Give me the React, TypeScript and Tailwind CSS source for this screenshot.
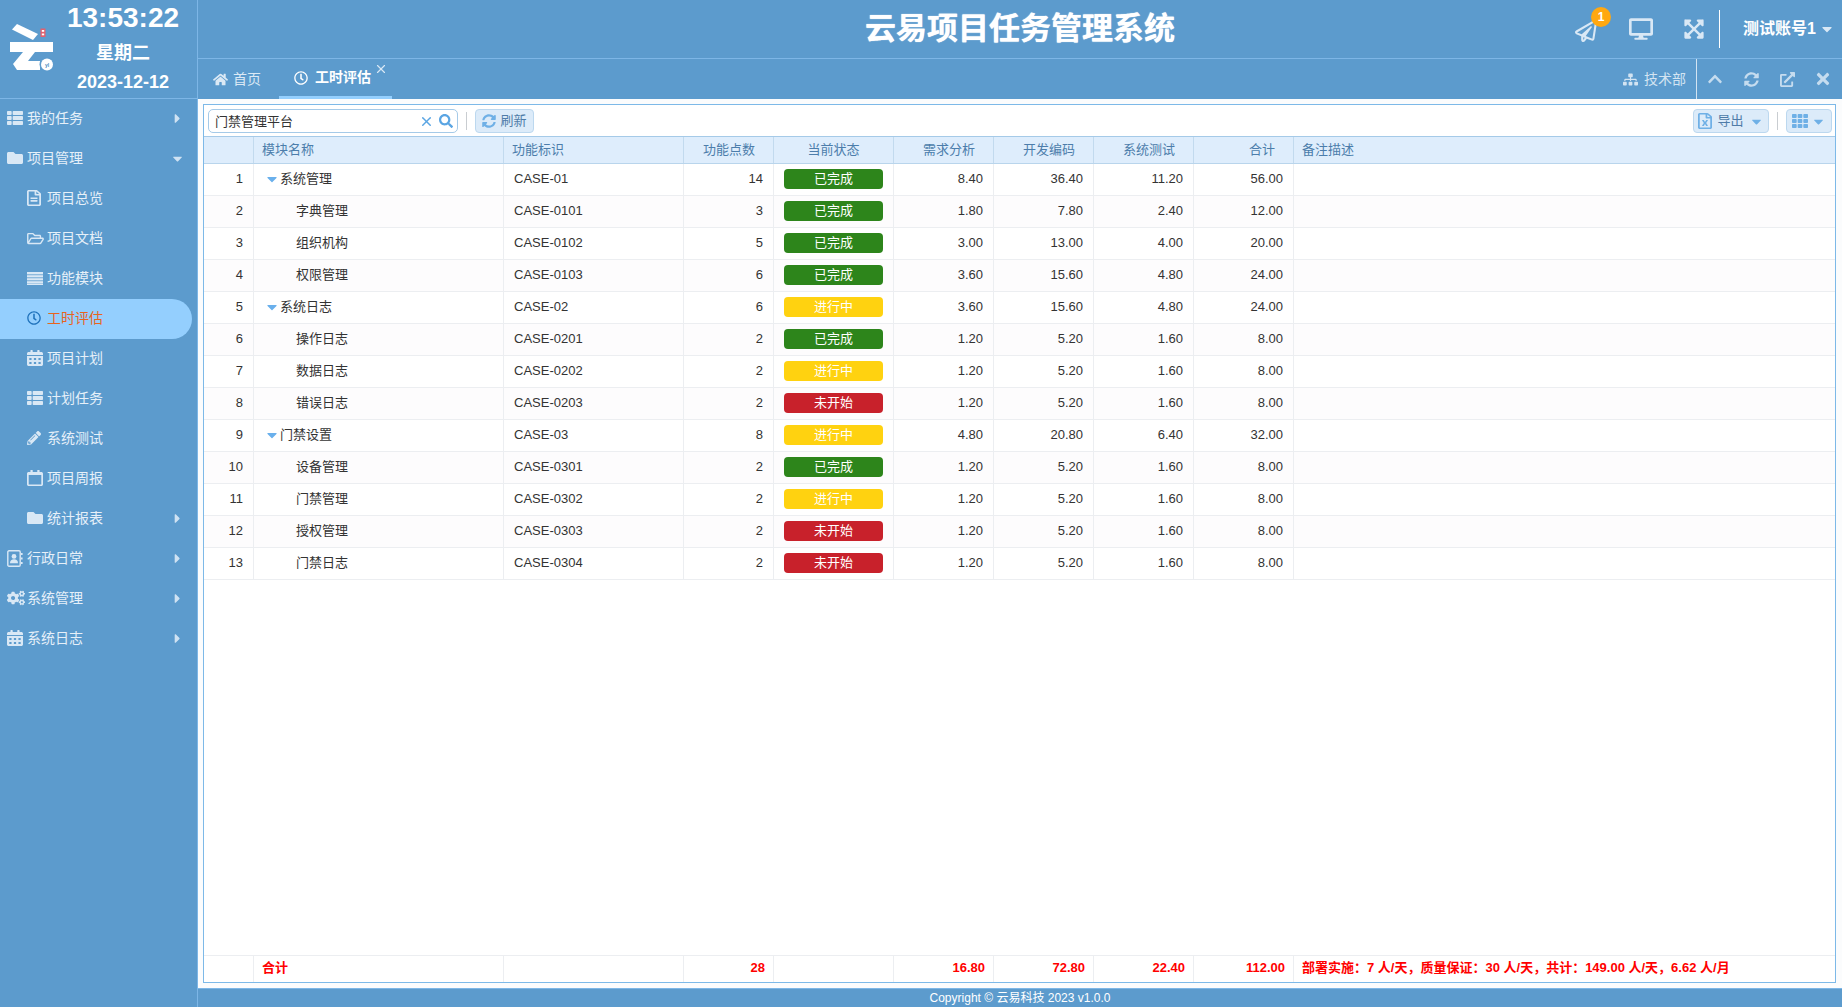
import React from "react";
import { X } from "lucide-react";
import {
  FaThList, FaFolder, FaRegFileAlt, FaRegFolderOpen, FaRegClock, FaCalendarAlt, FaPencilAlt,
  FaRegCalendar, FaCogs, FaCaretRight, FaCaretDown, FaHome, FaSitemap, FaChevronUp,
  FaSyncAlt, FaExternalLinkAlt, FaTimes, FaRegPaperPlane, FaDesktop, FaExpandArrowsAlt, FaSearch,
  FaRegFileExcel, FaTh,
} from "react-icons/fa";

type Item = { label: string; icon: React.ReactNode; sub?: boolean; caret?: "r" | "d"; active?: boolean };

const Stripes = () => (
  <svg viewBox="0 0 16 13" className="w-4 h-[13px]" fill="currentColor">
    <rect x="0" y="0" width="16" height="2.4" />
    <rect x="0" y="3.2" width="16" height="2.2" />
    <rect x="0" y="6.2" width="16" height="2.2" />
    <rect x="0" y="9.2" width="16" height="2.2" />
    <rect x="0" y="11.6" width="16" height="1.4" />
  </svg>
);

const Contact = () => (
  <svg viewBox="0 0 16 17" className="w-4 h-[17px]" fill="currentColor">
    <rect x="0.8" y="0.8" width="12.4" height="15.4" rx="1.2" fill="none" stroke="currentColor" strokeWidth="1.4" />
    <circle cx="7" cy="6.4" r="2.4" />
    <path d="M3 13.2c0-3 1.6-4 4-4s4 1 4 4z" />
    <rect x="14" y="3" width="1.6" height="2" />
    <rect x="14" y="7.5" width="1.6" height="2" />
    <rect x="14" y="12" width="1.6" height="2" />
  </svg>
);

const menu: Item[] = [
  { label: "我的任务", icon: <FaThList className="w-4 h-4" />, caret: "r" },
  { label: "项目管理", icon: <FaFolder className="w-4 h-4" />, caret: "d" },
  { label: "项目总览", icon: <FaRegFileAlt className="w-[14px] h-4" preserveAspectRatio="none" />, sub: true },
  { label: "项目文档", icon: <FaRegFolderOpen className="w-[17px] h-[15px]" />, sub: true },
  { label: "功能模块", icon: <Stripes />, sub: true },
  { label: "工时评估", icon: <FaRegClock className="w-[14px] h-[14px]" />, sub: true, active: true },
  { label: "项目计划", icon: <FaCalendarAlt className="w-4 h-4" preserveAspectRatio="none" />, sub: true },
  { label: "计划任务", icon: <FaThList className="w-4 h-4" />, sub: true },
  { label: "系统测试", icon: <FaPencilAlt className="w-[14px] h-[14px]" />, sub: true },
  { label: "项目周报", icon: <FaRegCalendar className="w-4 h-4" preserveAspectRatio="none" />, sub: true },
  { label: "统计报表", icon: <FaFolder className="w-4 h-4" />, sub: true, caret: "r" },
  { label: "行政日常", icon: <Contact />, caret: "r" },
  { label: "系统管理", icon: <FaCogs className="w-[18px] h-[16px]" />, caret: "r" },
  { label: "系统日志", icon: <FaCalendarAlt className="w-4 h-4" preserveAspectRatio="none" />, caret: "r" },
];

type St = "done" | "doing" | "todo";
type Row = [number, string, boolean, string, number, St, string, string, string, string];
const rows: Row[] = [
  [1, "系统管理", true, "CASE-01", 14, "done", "8.40", "36.40", "11.20", "56.00"],
  [2, "字典管理", false, "CASE-0101", 3, "done", "1.80", "7.80", "2.40", "12.00"],
  [3, "组织机构", false, "CASE-0102", 5, "done", "3.00", "13.00", "4.00", "20.00"],
  [4, "权限管理", false, "CASE-0103", 6, "done", "3.60", "15.60", "4.80", "24.00"],
  [5, "系统日志", true, "CASE-02", 6, "doing", "3.60", "15.60", "4.80", "24.00"],
  [6, "操作日志", false, "CASE-0201", 2, "done", "1.20", "5.20", "1.60", "8.00"],
  [7, "数据日志", false, "CASE-0202", 2, "doing", "1.20", "5.20", "1.60", "8.00"],
  [8, "错误日志", false, "CASE-0203", 2, "todo", "1.20", "5.20", "1.60", "8.00"],
  [9, "门禁设置", true, "CASE-03", 8, "doing", "4.80", "20.80", "6.40", "32.00"],
  [10, "设备管理", false, "CASE-0301", 2, "done", "1.20", "5.20", "1.60", "8.00"],
  [11, "门禁管理", false, "CASE-0302", 2, "doing", "1.20", "5.20", "1.60", "8.00"],
  [12, "授权管理", false, "CASE-0303", 2, "todo", "1.20", "5.20", "1.60", "8.00"],
  [13, "门禁日志", false, "CASE-0304", 2, "todo", "1.20", "5.20", "1.60", "8.00"],
];

const Status = ({ s }: { s: St }) => {
  if (s === "done") return <div className="mx-auto w-[99px] h-5 rounded-[4px] bg-[#2d851b] text-white text-center leading-[19px]">已完成</div>;
  if (s === "doing") return <div className="mx-auto w-[99px] h-5 rounded-[4px] bg-[#ffd210] text-white text-center leading-[19px]">进行中</div>;
  return <div className="mx-auto w-[99px] h-5 rounded-[4px] bg-[#c8212b] text-white text-center leading-[19px]">未开始</div>;
};

const Logo = () => (
  <svg viewBox="0 0 56 98" className="w-14 h-[98px] shrink-0">
    <polygon points="17,24 38,34 33,40 12,29.5" fill="#fff" />
    <polygon points="10,42 53,42 53,52 35,52 28,61 40,61 40,70 17,70 13,64 23,52 10,52" fill="#fff" />
    <circle cx="47" cy="64.5" r="7.5" fill="#5c9bcd" />
    <circle cx="47" cy="64.5" r="6" fill="#fff" />
    <text x="47" y="66.5" fontSize="5" fontWeight="700" textAnchor="middle" fill="#4a8ac0">yl</text>
    <rect x="40.5" y="28.5" width="5" height="8.5" fill="#e2616f" />
    <rect x="41.8" y="30" width="2.4" height="1.8" fill="#fff" />
    <rect x="41.8" y="33.5" width="2.4" height="1.8" fill="#fff" />
  </svg>
);

export default function App() {
  return (
    <div className="flex h-screen w-full overflow-hidden bg-[#5c9bcd] font-['Liberation_Sans','Noto_Sans_CJK_SC',sans-serif] text-[13px] text-[#333]">
      {/* sidebar */}
      <aside className="w-[198px] shrink-0 border-r border-[#7db6e6]">
        <div className="h-[99px] border-b border-[#7db6e6] flex">
          <Logo />
          <div className="w-[134px] text-white font-bold text-center">
            <div className="h-9 text-[28px] leading-9">13:53:22</div>
            <div className="h-[34px] text-[18px] leading-[34px]">星期二</div>
            <div className="h-6 text-[18px] leading-6">2023-12-12</div>
          </div>
        </div>
        <nav>
          {menu.map((m) => (
            <div
              key={m.label}
              className={
                "h-10 pb-[2px] flex items-center text-[14px] w-[192px] " +
                (m.sub ? "pl-[27px] " : "pl-[7px] ") +
                (m.active ? "bg-[#94cffe] rounded-r-[20px] text-[#e8641e]" : "text-[#e6f0f9]")
              }
            >
              <span className={"w-5 flex items-center " + (m.active ? "text-[#1f72bb]" : "text-[#d9e8f5]")}>{m.icon}</span>
              <span>{m.label}</span>
              {m.caret === "r" && <FaCaretRight className="ml-auto mr-[7px] w-[15px] h-[15px] text-[#cfe2f3]" />}
              {m.caret === "d" && <FaCaretDown className="ml-auto mr-[7px] w-[15px] h-[15px] text-[#cfe2f3]" />}
            </div>
          ))}
        </nav>
      </aside>

      {/* main */}
      <main className="flex-1 min-w-0 flex flex-col">
        <header className="h-[59px] shrink-0 border-b border-[#7db6e6] grid grid-cols-[267px_1fr_267px] items-center">
          <div />
          <h1 className="text-center text-[31px] font-bold text-white [text-shadow:0_0_1px_#fff]">云易项目任务管理系统</h1>
          <div className="flex items-center text-[#d9e8f5]">
            <div className="relative w-[22px] h-[22px] mt-[4px]">
              <FaRegPaperPlane className="w-[22px] h-[22px]" />
              <span className="absolute -top-[13px] left-[16px] w-5 h-5 rounded-full bg-[#ffa811] text-white text-[12px] font-bold flex items-center justify-center">1</span>
            </div>
            <FaDesktop className="ml-[32px] w-6 h-6" />
            <FaExpandArrowsAlt className="ml-[31px] w-5 h-[22px]" />
            <div className="ml-[15px] w-px h-[38px] bg-white" />
            <span className="ml-[23px] text-[16px] font-bold text-white">测试账号1</span>
            <FaCaretDown className="ml-[3px] w-4 h-4" />
          </div>
        </header>

        <div className="h-10 shrink-0 flex items-stretch text-[14px]">
          <div className="w-[81px] pl-[15px] flex items-center gap-[5px] text-[#dbe9f5]">
            <FaHome className="w-[15px] h-[15px]" />
            <span>首页</span>
          </div>
          <div className="relative w-[113px] pl-[15px] flex items-center gap-[7px] text-white border-b-[3px] border-[#94cffe] font-bold">
            <FaRegClock className="w-[14px] h-[14px]" />
            <span>工时评估</span>
            <X className="absolute top-[3px] right-[4px] w-[14px] h-[14px] text-[#d9e8f5]" />
          </div>
          <div className="ml-auto flex items-center gap-[6px] pr-[10px] text-[#d3e4f2]">
            <FaSitemap className="w-[15px] h-[15px]" />
            <span>技术部</span>
          </div>
          <div className="flex pr-px border-l border-[#d3e4f2] text-[#c5dcef]">
            <div className="w-9 flex items-center justify-center"><FaChevronUp className="w-[16px] h-[16px]" /></div>
            <div className="w-9 flex items-center justify-center"><FaSyncAlt className="w-[15px] h-[15px]" /></div>
            <div className="w-9 flex items-center justify-center"><FaExternalLinkAlt className="w-[15px] h-[15px]" /></div>
            <div className="w-9 flex items-center justify-center"><FaTimes className="w-[18px] h-[18px]" /></div>
          </div>
        </div>

        <div className="flex-1 min-h-0 bg-[#fbfcfd] border-b border-[#7db6e6] pt-[5px] pl-[5px] pr-[6px] pb-[5px] flex">
          <section className="flex-1 min-w-0 flex flex-col border border-[#7db9e8] bg-white">
            {/* toolbar */}
            <div className="h-8 shrink-0 flex pt-1 pl-1 pr-[3px] border-b border-[#a5cae8] items-start">
              <div className="w-[250px] h-6 rounded-[5px] border border-[#a5cae8] flex items-center pl-[6px] pr-[4px] text-[#333] bg-white">
                <span className="flex-1 leading-[23px]">门禁管理平台</span>
                <X className="w-[15px] h-[15px] text-[#5aa5e3] mr-[5px]" strokeWidth={2.4} />
                <FaSearch className="w-[14px] h-[14px] text-[#5aa5e3]" />
              </div>
              <div className="ml-2 mt-[3px] w-px h-[18px] bg-[#c9cdd1]" />
              <div className="ml-2 w-[59px] h-6 rounded-[4px] bg-[#dcebf9] border border-[#bcd8ef] flex items-center justify-center gap-1 text-[#4f7ca8]">
                <FaSyncAlt className="w-[14px] h-[14px] text-[#6fb0e6]" />
                <span>刷新</span>
              </div>
              <div className="ml-auto w-[76px] h-6 rounded-[4px] bg-[#dcebf9] border border-[#bcd8ef] flex items-center justify-center gap-[5px] text-[#4f7ca8]">
                <FaRegFileExcel className="w-[14px] h-4 text-[#6fb0e6]" preserveAspectRatio="none" />
                <span>导出</span>
                <FaCaretDown className="w-[15px] h-[15px] text-[#6fb0e6]" />
              </div>
              <div className="ml-2 mt-[3px] w-px h-[18px] bg-[#c9cdd1]" />
              <div className="ml-2 w-[46px] h-6 rounded-[4px] bg-[#dcebf9] border border-[#bcd8ef] flex items-center justify-center gap-[3px] text-[#6fb0e6]">
                <FaTh className="w-4 h-4" />
                <FaCaretDown className="w-[15px] h-[15px]" />
              </div>
            </div>

            {/* head */}
            <div className="h-[27px] shrink-0 flex items-stretch bg-[#deedfc] border-b border-[#b9d5ec] text-[#4c7dab] leading-[26px]">
              <div className="w-[50px] shrink-0 border-r border-[#c2daee]" />
              <div className="w-[250px] shrink-0 border-r border-[#c2daee] pl-2">模块名称</div>
              <div className="w-[180px] shrink-0 border-r border-[#c2daee] pl-2">功能标识</div>
              <div className="w-[90px] shrink-0 border-r border-[#c2daee] pr-[18px] text-right">功能点数</div>
              <div className="w-[120px] shrink-0 border-r border-[#c2daee] text-center">当前状态</div>
              <div className="w-[100px] shrink-0 border-r border-[#c2daee] pr-[18px] text-right">需求分析</div>
              <div className="w-[100px] shrink-0 border-r border-[#c2daee] pr-[18px] text-right">开发编码</div>
              <div className="w-[100px] shrink-0 border-r border-[#c2daee] pr-[18px] text-right">系统测试</div>
              <div className="w-[100px] shrink-0 border-r border-[#c2daee] pr-[18px] text-right">合计</div>
              <div className="flex-1 pl-2">备注描述</div>
            </div>

            {/* body */}
            <div className="flex-1 min-h-0">
              {rows.map((r) => (
                <div key={r[0]} className={"h-8 flex items-stretch border-b border-[#eceef1] leading-[29px] " + (r[0] % 2 === 0 ? "bg-[#fdfcfd]" : "bg-white")}>
                  <div className="w-[50px] shrink-0 border-r border-[#eceef1] pr-[10px] text-right">{r[0]}</div>
                  <div className={"w-[250px] shrink-0 border-r border-[#eceef1] flex items-center pb-[2px] " + (r[2] ? "pl-[10px]" : "pl-[42px]")}>
                    {r[2] && <FaCaretDown className="w-4 h-4 text-[#6ab0ec]" />}
                    <span>{r[1]}</span>
                  </div>
                  <div className="w-[180px] shrink-0 border-r border-[#eceef1] pl-[10px]">{r[3]}</div>
                  <div className="w-[90px] shrink-0 border-r border-[#eceef1] pr-[10px] text-right">{r[4]}</div>
                  <div className="w-[120px] shrink-0 border-r border-[#eceef1] pt-[5px]"><Status s={r[5]} /></div>
                  <div className="w-[100px] shrink-0 border-r border-[#eceef1] pr-[10px] text-right">{r[6]}</div>
                  <div className="w-[100px] shrink-0 border-r border-[#eceef1] pr-[10px] text-right">{r[7]}</div>
                  <div className="w-[100px] shrink-0 border-r border-[#eceef1] pr-[10px] text-right">{r[8]}</div>
                  <div className="w-[100px] shrink-0 border-r border-[#eceef1] pr-[10px] text-right">{r[9]}</div>
                  <div className="flex-1" />
                </div>
              ))}
            </div>

            {/* summary */}
            <div className="h-[27px] shrink-0 flex items-stretch border-t border-[#eceef1] text-[#f00] font-bold leading-[23px]">
              <div className="w-[50px] shrink-0 border-r border-[#eceef1]" />
              <div className="w-[250px] shrink-0 border-r border-[#eceef1] pl-2">合计</div>
              <div className="w-[180px] shrink-0 border-r border-[#eceef1]" />
              <div className="w-[90px] shrink-0 border-r border-[#eceef1] pr-2 text-right">28</div>
              <div className="w-[120px] shrink-0 border-r border-[#eceef1]" />
              <div className="w-[100px] shrink-0 border-r border-[#eceef1] pr-2 text-right">16.80</div>
              <div className="w-[100px] shrink-0 border-r border-[#eceef1] pr-2 text-right">72.80</div>
              <div className="w-[100px] shrink-0 border-r border-[#eceef1] pr-2 text-right">22.40</div>
              <div className="w-[100px] shrink-0 border-r border-[#eceef1] pr-2 text-right">112.00</div>
              <div className="flex-1 pl-2">部署实施：7 人/天，质量保证：30 人/天，共计：149.00 人/天，6.62 人/月</div>
            </div>
          </section>
        </div>

        <footer className="h-[18px] shrink-0 text-center text-white text-[12px] leading-[18px]">Copyright © 云易科技 2023 v1.0.0</footer>
      </main>
    </div>
  );
}
